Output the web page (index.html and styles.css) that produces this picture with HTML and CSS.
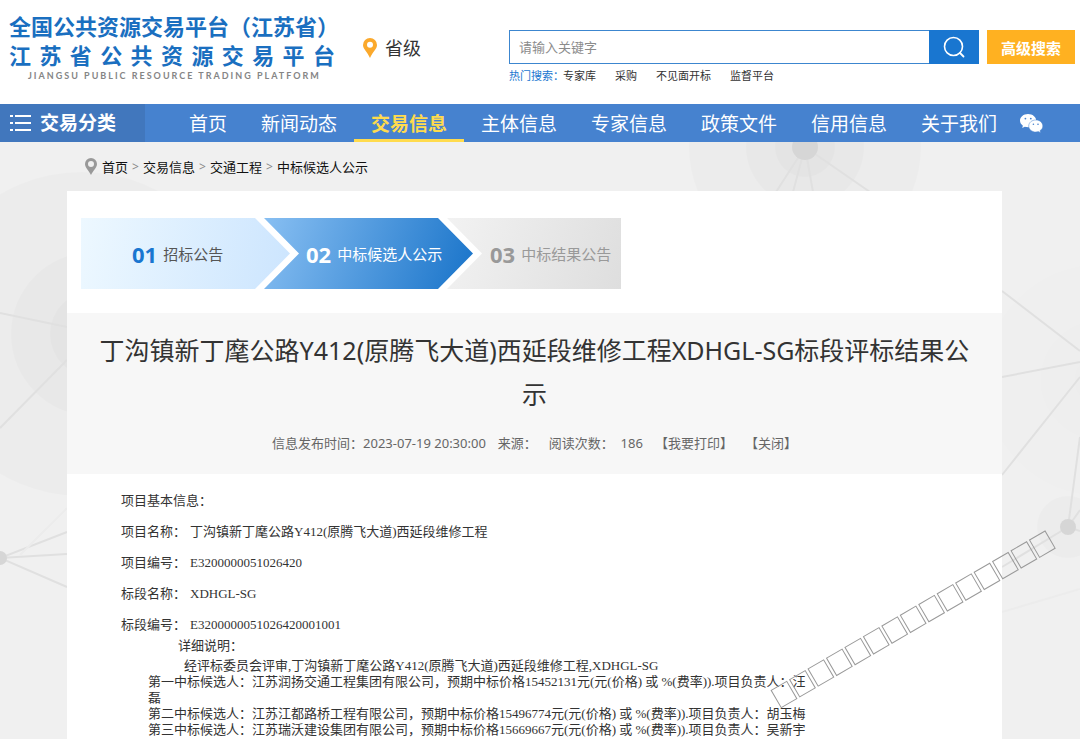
FILE: index.html
```html
<!DOCTYPE html>
<html lang="zh-CN">
<head>
<meta charset="utf-8">
<meta name="viewport" content="width=device-width, initial-scale=1">
<title>江苏省公共资源交易平台</title>
<link rel="stylesheet" href="styles.css">
</head>
<body>
<header class="header">
  <div class="brand">
    <div class="brand-line">全国公共资源交易平台（江苏省）</div>
    <div class="brand-line brand-wide">江苏省公共资源交易平台</div>
    <div class="brand-en">JIANGSU PUBLIC RESOURCE TRADING PLATFORM</div>
  </div>
  <div class="region">
    <svg class="region-pin" viewBox="0 0 14 20" aria-hidden="true"><path fill="#fba92c" fill-rule="evenodd" d="M7 0a7 7 0 0 0-7 7c0 4 4.500 7 7 13 2.500-6 7-9 7-13a7 7 0 0 0-7-7zm0 3.800a3 3 0 1 1 0 6 3 3 0 0 1 0-6z"/></svg>
    <span>省级</span>
  </div>
  <form class="search">
    <div class="search-row">
      <input class="search-input" type="text" placeholder="请输入关键字" aria-label="请输入关键字">
      <button class="search-button" type="button" aria-label="搜索">
        <svg viewBox="0 0 22 22" width="22" height="22" aria-hidden="true"><circle cx="10.500" cy="10.500" r="9" fill="none" stroke="#fff" stroke-width="1.600"/><path d="M17 17l3.500 3.500" stroke="#fff" stroke-width="1.800" stroke-linecap="round"/></svg>
      </button>
      <button class="advanced" type="button">高级搜索</button>
    </div>
    <div class="hot">
      <span class="hot-label">热门搜索：</span>
      <a href="#">专家库</a><a href="#">采购</a><a href="#">不见面开标</a><a href="#">监督平台</a>
    </div>
  </form>
</header>

<nav class="nav">
  <a class="category" href="#">
    <svg viewBox="0 0 21 17" width="21" height="17" aria-hidden="true"><path fill="#fff" d="M0 0h3v2H0zM5 0h16v2H5zM0 7h3v2H0zM5 7h16v2H5zM0 14h3v2H0zM5 14h16v2H5z"/></svg>
    <span>交易分类</span>
  </a>
  <div class="menu">
    <a href="#">首页</a>
    <a href="#">新闻动态</a>
    <a class="active" href="#">交易信息</a>
    <a href="#">主体信息</a>
    <a href="#">专家信息</a>
    <a href="#">政策文件</a>
    <a href="#">信用信息</a>
    <a href="#">关于我们</a>
  </div>
  <a class="wechat" href="#" aria-label="微信">
    <svg viewBox="0 0 23 19" width="23" height="19" aria-hidden="true">
      <path fill="#fff" d="M8 0C3.500 0 0 2.900 0 6.600c0 2.100 1.100 3.900 2.900 5.100L2.200 14l2.600-1.300c1 .3 2 .5 3.400.5 4.400 0 8-2.900 8-6.600S12.500 0 8 0z"/>
      <path fill="#fff" stroke="#4682cf" stroke-width=".5" d="M15.800 6c-4 0-7.100 2.700-7.100 6s3.100 6 7.100 6c.9 0 1.800-.2 2.500-.4l2.300 1.200-.6-2.100c1.700-1.100 2.800-2.800 2.800-4.700 0-3.300-3-6-7-6z"/>
      <g fill="#4682cf"><circle cx="5.400" cy="4.600" r=".9"/><circle cx="10.800" cy="4.600" r=".9"/><circle cx="13.400" cy="10.300" r=".8"/><circle cx="18" cy="10.300" r=".8"/></g>
    </svg>
  </a>
</nav>

<div class="page">
  <svg class="network" width="1080" height="597" viewBox="0 142 1080 597" aria-hidden="true">
    <g fill="#000" fill-opacity=".015">
      <circle cx="805" cy="147" r="116"/><circle cx="805" cy="147" r="59"/><circle cx="805" cy="147" r="30"/>
      <circle cx="82" cy="334" r="162"/><circle cx="93" cy="334" r="82"/><circle cx="93" cy="334" r="43"/>
      <circle cx="1068" cy="527" r="31"/>
    </g>
    <g fill="#000" fill-opacity=".004"><circle cx="1100" cy="380" r="116"/><circle cx="1100" cy="380" r="60"/><circle cx="1100" cy="380" r="26"/></g>
    <path fill="none" stroke="#e0e0e0" stroke-width="2" d="M805 147L776 192M805 147L793 192M805 147L813 192M805 147L870 192M0 313L67 327M0 428L67 360M0 558L67 532M0 558L67 554M0 558L67 587M1002 291L1080 351M1002 377L1080 362M1002 475L1080 377M1068 527L1080 437M1068 527L1080 510M1068 527L1080 531M1068 527L1002 567"/>
    <path fill="none" stroke="#ececec" stroke-width="2" d="M1002 612L1080 589M20 555L67 508"/>
    <g fill="#d6d6d6"><circle cx="805" cy="147" r="13"/><circle cx="0" cy="558" r="7"/><circle cx="1068" cy="527" r="8"/></g>
  </svg>

  <div class="crumbs">
    <svg viewBox="0 0 12 17" width="12" height="17" aria-hidden="true"><path fill="#999" fill-rule="evenodd" d="M6 0a6 6 0 0 0-6 6c0 3.500 3.500 6 6 11 2.500-5 6-7.500 6-11a6 6 0 0 0-6-6zm0 3a3 3 0 1 1 0 6 3 3 0 0 1 0-6z"/></svg>
    <a href="#">首页</a><i>&gt;</i><a href="#">交易信息</a><i>&gt;</i><a href="#">交通工程</a><i>&gt;</i><a href="#">中标候选人公示</a>
  </div>

  <main class="card">
    <div class="steps">
      <a class="step step-one" href="#"><b>01</b>招标公告</a>
      <a class="step step-two" href="#"><b>02</b>中标候选人公示</a>
      <a class="step step-three" href="#"><b>03</b>中标结果公告</a>
    </div>
    <section class="title-block">
      <h1>丁沟镇新丁麾公路Y412(原腾飞大道)西延段维修工程XDHGL-SG标段评标结果公示</h1>
      <div class="meta">
        <span>信息发布时间：2023-07-19 20:30:00</span>
        <span>来源：</span>
        <span class="reads">阅读次数：&nbsp; 186</span>
        <a href="#">【我要打印】</a>
        <a href="#">【关闭】</a>
      </div>
    </section>
    <article class="article">
      <p class="field"><span>项目基本信息：</span></p>
      <p class="field"><span>项目名称：</span><span>丁沟镇新丁麾公路Y412(原腾飞大道)西延段维修工程</span></p>
      <p class="field"><span>项目编号：</span><span>E3200000051026420</span></p>
      <p class="field"><span>标段名称：</span><span>XDHGL-SG</span></p>
      <p class="field"><span>标段编号：</span><span>E3200000051026420001001</span></p>
      <div class="detail">
        <p class="detail-title">详细说明：</p>
        <p class="detail-intro">经评标委员会评审,丁沟镇新丁麾公路Y412(原腾飞大道)西延段维修工程,XDHGL-SG</p>
        <p>第一中标候选人：江苏润扬交通工程集团有限公司，预期中标价格15452131元(元(价格) 或 %(费率)).项目负责人：汪磊</p>
        <p>第二中标候选人：江苏江都路桥工程有限公司，预期中标价格15496774元(元(价格) 或 %(费率)).项目负责人：胡玉梅</p>
        <p>第三中标候选人：江苏瑞沃建设集团有限公司，预期中标价格15669667元(元(价格) 或 %(费率)).项目负责人：吴新宇</p>
      </div>
    </article>
  </main>

  <svg class="watermark" width="290" height="182" viewBox="768 528 290 182" aria-hidden="true">
    <defs><rect id="box" x="-9" y="-10" width="18" height="20"/></defs>
    <g fill="none" stroke="#999" stroke-width="1" transform="translate(784 694.500) rotate(-30.200)">
      <use href="#box" x="0"/><use href="#box" x="21.350"/><use href="#box" x="42.700"/><use href="#box" x="64.050"/><use href="#box" x="85.400"/><use href="#box" x="106.750"/><use href="#box" x="128.100"/><use href="#box" x="149.450"/><use href="#box" x="170.800"/><use href="#box" x="192.150"/><use href="#box" x="213.500"/><use href="#box" x="234.850"/><use href="#box" x="256.200"/><use href="#box" x="277.550"/><use href="#box" x="298.900"/>
    </g>
  </svg>
</div>
</body>
</html>
```

FILE: styles.css
```css
* { box-sizing: border-box; }
html { height: 100%; }
body {
  margin: 0;
  min-height: 100%;
  display: flex;
  flex-direction: column;
  background: #fff;
  color: #333;
  font-family: "Noto Sans", "Noto Sans CJK SC", sans-serif;
  font-size: 13px;
}
a { color: inherit; text-decoration: none; }
p, h1 { margin: 0; }
svg { display: block; flex: none; }
button { border: 0; padding: 0; font-family: inherit; cursor: pointer; }

.header {
  display: flex;
  align-items: flex-start;
  height: 104px;
  padding: 12px 5px 0 9px;
}
.brand { width: 338px; flex: none; }
.brand-line {
  color: #1a6fc0;
  font: bold 22px/29px Lato, "Noto Sans CJK SC", sans-serif;
  white-space: nowrap;
}
.brand-wide {
  width: 326px;
  text-align: justify;
  text-align-last: justify;
}
.brand-en {
  padding-left: 19px;
  color: #858585;
  font: bold 9px/12px Lato, sans-serif;
  letter-spacing: 2px;
  white-space: nowrap;
}
.region {
  display: flex;
  align-items: center;
  gap: 8px;
  margin: 22px 0 0 16px;
  font-size: 18px;
  line-height: 28px;
}
.region-pin { width: 14px; height: 20px; }
.search { flex: 1; margin: 18px 0 0 88px; }
.search-row { display: flex; height: 34px; }
.search-input {
  flex: 1;
  min-width: 0;
  padding: 0 9px 2px;
  border: 1px solid #3c86cf;
  border-right: 0;
  font: 13px "Noto Sans CJK SC", sans-serif;
  outline: 0;
}
.search-input::placeholder { color: #8c8c8c; }
.search-button {
  display: flex;
  align-items: center;
  justify-content: center;
  width: 50px;
  background: #1976d0;
}
.advanced {
  width: 88px;
  margin-left: 8px;
  background: #ffb121;
  color: #fff;
  font-size: 15px;
  font-weight: bold;
}
.hot {
  display: flex;
  gap: 19px;
  font-size: 11px;
  line-height: 24px;
}
.hot-label { color: #1976d0; margin-right: -20px; }

.nav {
  display: flex;
  height: 38px;
  background: #4682cf;
  color: #fff;
  font-size: 19px;
  line-height: 40px;
  white-space: nowrap;
}
.category {
  display: flex;
  align-items: center;
  gap: 9px;
  width: 145px;
  padding-left: 10px;
  background: #4177bd;
  font-weight: bold;
}
.menu { display: flex; margin-left: 27px; }
.menu a { padding: 0 17px; }
.menu .active {
  border-bottom: 3px solid #ffdb4d;
  color: #ffdb4d;
  font-weight: bold;
}
.wechat { display: flex; align-items: center; margin-left: 6px; }

.page {
  position: relative;
  flex: 1;
  display: flex;
  flex-direction: column;
  overflow: hidden;
  background: #f0f0f0;
}
.network { position: absolute; left: 0; top: 0; }
.crumbs {
  position: relative;
  display: flex;
  align-items: center;
  height: 49px;
  padding-left: 85px;
  color: #111;
  font-size: 13px;
}
.crumbs svg { margin-right: 5px; }
.crumbs i {
  width: 15px;
  color: #888;
  font-style: normal;
  font-size: 12px;
  text-align: center;
}
.card {
  position: relative;
  flex: 1;
  margin: 0 78px 0 67px;
  background: #fff;
}
.steps { display: flex; padding: 27px 14px 24px; }
.step {
  display: flex;
  align-items: center;
  gap: 6px;
  height: 71px;
  font-size: 15px;
  white-space: nowrap;
}
.step b { font-size: 22px; }
.step-one {
  width: 209px;
  padding-left: 51px;
  background: linear-gradient(100deg, #edf8ff, #cce5fe);
  clip-path: polygon(0 0, 174px 0, 100% 50%, 174px 100%, 0 100%);
  color: #555;
}
.step-one b { color: #1976d0; }
.step-two {
  width: 209px;
  margin-left: -26px;
  padding-left: 42px;
  background: linear-gradient(110deg, #88bff2, #1873c9);
  clip-path: polygon(0 0, 174px 0, 100% 50%, 174px 100%, 0 100%, 35px 50%);
  color: #fff;
}
.step-three {
  width: 174px;
  margin-left: -26px;
  padding-left: 43px;
  background: linear-gradient(110deg, #f2f2f2, #dedede);
  clip-path: polygon(0 0, 100% 0, 100% 100%, 0 100%, 35px 50%);
  color: #999;
}
.title-block {
  padding: 15px 28px 19px;
  background: #f7f7f7;
  text-align: center;
}
h1 {
  font-size: 25px;
  font-weight: normal;
  line-height: 44px;
}
.meta {
  display: flex;
  justify-content: center;
  gap: 12px;
  padding-top: 15px;
  color: #666;
  font-size: 13px;
  line-height: 24px;
}
.article {
  padding: 11px 54px 20px;
  font-family: "Liberation Serif", "Noto Sans CJK SC", serif;
  font-size: 13px;
}
.field { display: flex; gap: 4px; line-height: 31px; }
.detail { max-width: 686px; padding-left: 27px; line-height: 16px; }
.detail-title { padding-left: 30px; line-height: 12px; }
.detail-intro { padding: 6px 0 0 36px; }
.watermark { position: absolute; left: 768px; top: 386px; }
```
